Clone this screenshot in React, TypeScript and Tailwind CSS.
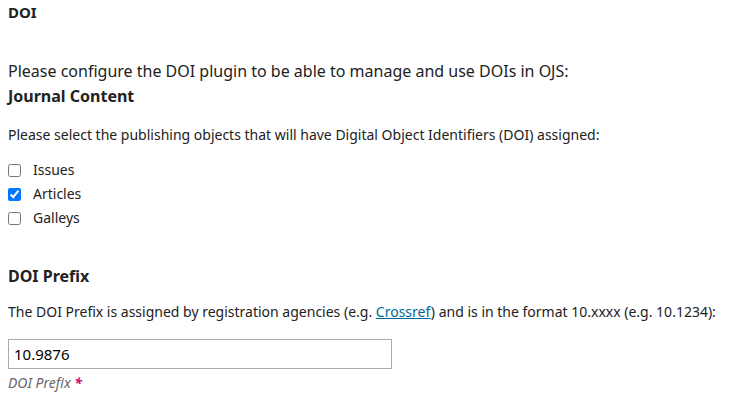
export default function App() {
  return (
    <div className="min-h-[404px] bg-white px-2 text-[#222] font-['Noto_Sans',sans-serif]">
      <h2 className="pt-[2px] text-[15px] leading-5 font-bold">DOI</h2>

      <p className="mt-[37px] text-base leading-6">
        Please configure the DOI plugin to be able to manage and use DOIs in OJS:
      </p>
      <h3 className="mt-[1px] text-base leading-6 font-bold">Journal Content</h3>

      <p className="mt-[17px] text-sm leading-5">
        Please select the publishing objects that will have Digital Object Identifiers (DOI) assigned:
      </p>

      <div className="mt-[13px] flex flex-col">
        {[
          { label: "Issues", checked: false },
          { label: "Articles", checked: true },
          { label: "Galleys", checked: false },
        ].map((item) => (
          <label key={item.label} className="flex h-6 items-center gap-3 text-sm">
            <input type="checkbox" defaultChecked={item.checked} className="m-0 h-[13px] w-[13px]" />
            {item.label}
          </label>
        ))}
      </div>

      <h3 className="mt-[34px] text-base leading-6 font-bold">DOI Prefix</h3>

      <p className="mt-[14px] text-sm leading-5">
        The DOI Prefix is assigned by registration agencies (e.g.{" "}
        <a href="#" className="text-[#006798] underline">Crossref</a>) and is in the format 10.xxxx (e.g. 10.1234):
      </p>

      <input
        type="text"
        defaultValue="10.9876"
        className="mt-[17px] block h-[30px] w-[384px] border border-[#aaa] px-[5px] text-[15px] text-black outline-none"
      />
      <div className="mt-[4px] text-sm leading-5 italic text-[#666]">
        DOI Prefix <span className="font-bold text-[#d00a6c]">*</span>
      </div>
    </div>
  )
}
